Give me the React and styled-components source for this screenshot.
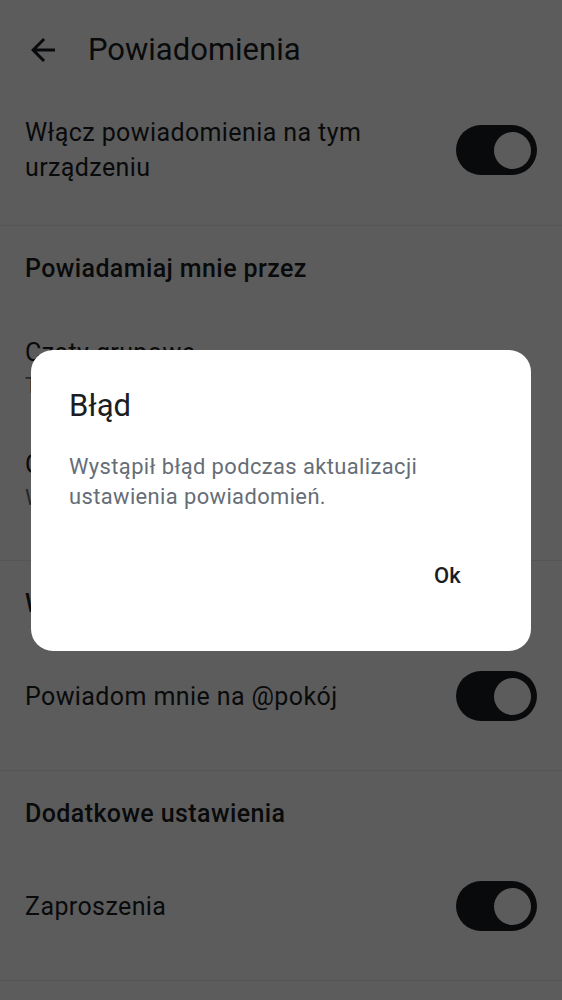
import styled, { createGlobalStyle } from 'styled-components'

const GlobalStyle = createGlobalStyle`
	html, body {
		margin: 0;
		padding: 0;
		background: #ffffff;
	}
	body {
		font-family: Roboto, 'Noto Sans', sans-serif;
		color: #1b1d22;
	}
`

const Screen = styled.div`
	position: relative;
	width: 562px;
	height: 1000px;
	overflow: hidden;
	background: #ffffff;
`

const TopBar = styled.div`
	display: flex;
	align-items: center;
	height: 98px;
	padding: 2px 25px 0;
	box-sizing: border-box;
	gap: 27px;
`

const BackIcon = styled.svg`
	width: 36px;
	height: 36px;
	fill: #1b1d22;
	flex-shrink: 0;
`

const PageTitle = styled.h1`
	margin: 0;
	font-size: 31px;
	font-weight: 400;
	line-height: 40px;
	color: #1b1d22;
`

const Section = styled.section`
	display: flex;
	flex-direction: column;
	padding: ${({ $top }) => $top ?? 28}px 25px ${({ $bottom }) => $bottom ?? 49}px;
	border-bottom: 1px solid #ebebeb;
`

const SectionTitle = styled.h2`
	margin: 0 0 52px;
	font-size: 25px;
	font-weight: 500;
	line-height: 30px;
	letter-spacing: 0.4px;
`

const ItemList = styled.div`
	display: flex;
	flex-direction: column;
	gap: 46px;
`

const Row = styled.div`
	display: flex;
	align-items: center;
	justify-content: space-between;
	gap: 16px;
`

const RowText = styled.div`
	display: flex;
	flex-direction: column;
	font-size: 25px;
	letter-spacing: 0.4px;
	line-height: ${({ $lh }) => $lh ?? 35}px;
`

const Subtitle = styled.span`
	color: #656d77;
	font-size: 22px;
	letter-spacing: 0.4px;
	line-height: 33px;
`

const Track = styled.div`
	display: flex;
	align-items: center;
	justify-content: flex-end;
	flex-shrink: 0;
	width: 81px;
	height: 50px;
	padding: 0 6.5px;
	box-sizing: border-box;
	border-radius: 25px;
	background: #1b1d22;
`

const Thumb = styled.div`
	width: 37px;
	height: 37px;
	border-radius: 50%;
	background: #ffffff;
`

const Scrim = styled.div`
	position: absolute;
	inset: 0;
	display: flex;
	align-items: center;
	justify-content: center;
	background: rgba(0, 0, 0, 0.64);
`

const Dialog = styled.div`
	display: flex;
	flex-direction: column;
	width: 500px;
	height: 301px;
	padding: 36px 46px 51px 38px;
	box-sizing: border-box;
	border-radius: 22px;
	background: #ffffff;
`

const DialogTitle = styled.h3`
	margin: 0;
	font-size: 31px;
	font-weight: 400;
	line-height: 40px;
	color: #1b1d22;
`

const DialogBody = styled.p`
	margin: 26px 0 0;
	font-size: 21.9px;
	line-height: 30px;
	letter-spacing: 0.4px;
	color: #656d77;
`

const Actions = styled.div`
	display: flex;
	justify-content: flex-end;
	margin-top: auto;
`

const TextButton = styled.button`
	height: 48px;
	padding: 0 24px;
	border: none;
	background: none;
	font-family: Roboto, sans-serif;
	font-size: 22px;
	font-weight: 500;
	letter-spacing: 0.15px;
	color: #1b1d22;
`

const Toggle = () => (
	<Track>
		<Thumb />
	</Track>
)

export default function App() {
	return (
		<Screen>
			<GlobalStyle />
			<TopBar>
				<BackIcon viewBox='0 0 24 24'>
					<path d='M20 11H7.83l5.59-5.59L12 4l-8 8 8 8 1.41-1.41L7.83 13H20v-2z' />
				</BackIcon>
				<PageTitle>Powiadomienia</PageTitle>
			</TopBar>

			<Section $top={17} $bottom={40}>
				<Row>
					<RowText>Włącz powiadomienia na tym urządzeniu</RowText>
					<Toggle />
				</Row>
			</Section>

			<Section $bottom={46}>
				<SectionTitle>Powiadamiaj mnie przez</SectionTitle>
				<ItemList>
					<RowText $lh={33}>
						Czaty grupowe
						<Subtitle>Tylko wzmianki i słowa kluczowe</Subtitle>
					</RowText>
					<RowText $lh={33}>
						Czaty bezpośrednie
						<Subtitle>Wszystkie wiadomości</Subtitle>
					</RowText>
				</ItemList>
			</Section>

			<Section $bottom={49}>
				<SectionTitle>Wzmianki</SectionTitle>
				<Row>
					<RowText>Powiadom mnie na @pokój</RowText>
					<Toggle />
				</Row>
			</Section>

			<Section $bottom={49}>
				<SectionTitle>Dodatkowe ustawienia</SectionTitle>
				<Row>
					<RowText>Zaproszenia</RowText>
					<Toggle />
				</Row>
			</Section>

			<Scrim>
				<Dialog>
					<DialogTitle>Błąd</DialogTitle>
					<DialogBody>
						Wystąpił błąd podczas aktualizacji
						<br />
						ustawienia powiadomień.
					</DialogBody>
					<Actions>
						<TextButton>Ok</TextButton>
					</Actions>
				</Dialog>
			</Scrim>
		</Screen>
	)
}
